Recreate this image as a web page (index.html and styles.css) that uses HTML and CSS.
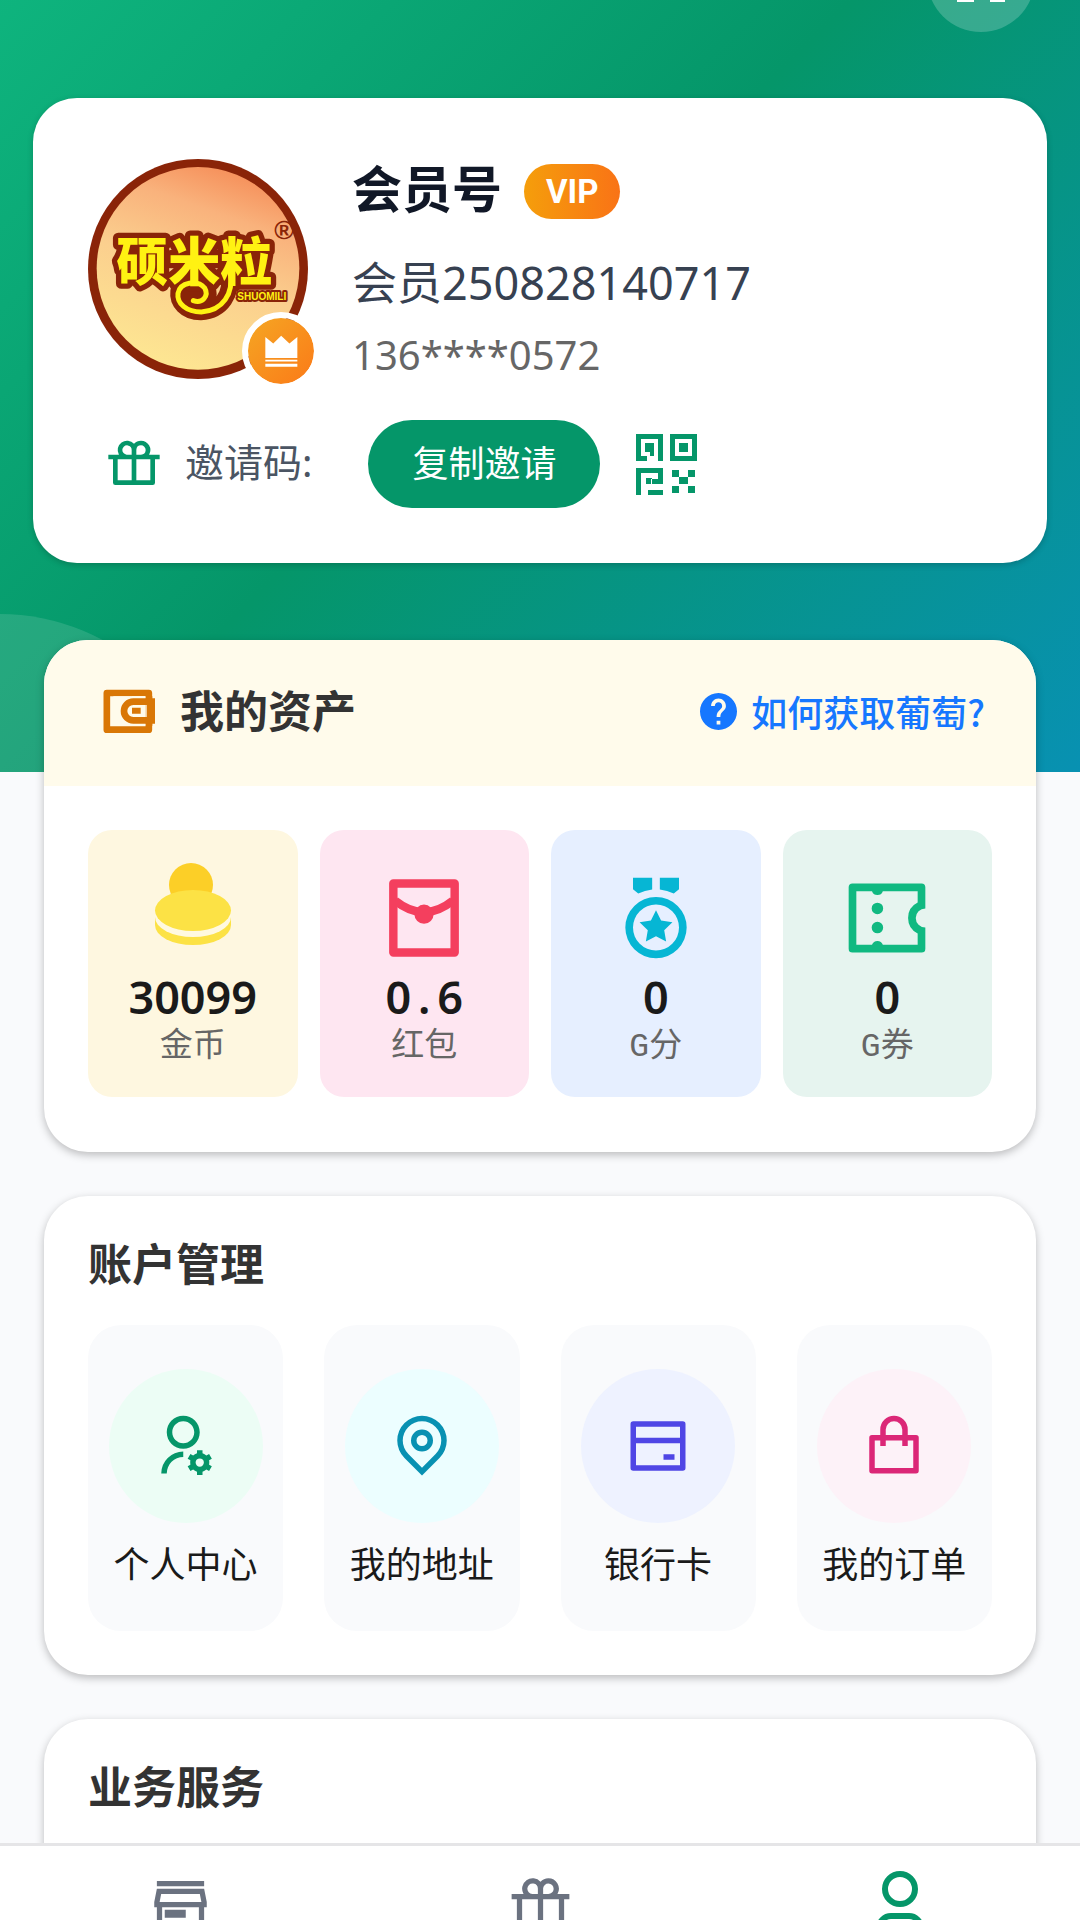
FILE: index.html
```html
<!DOCTYPE html>
<html lang="zh-CN">
<head>
<meta charset="utf-8">
<meta name="viewport" content="width=device-width, initial-scale=1">
<title>会员中心</title>
<link rel="stylesheet" href="styles.css">
</head>
<body>
<main class="page">
  <header class="hero">
    <button class="hero-action" type="button" aria-label="扫码">
      <svg viewBox="0 0 48 48" width="48" height="48"><path d="M0 30h5v13h12v5H0zM48 30h-5v13H33v5h15z" fill="#fff"/></svg>
    </button>
    <section class="profile">
      <div class="profile-top">
        <div class="avatar">
          <svg class="avatar-img" viewBox="55 57 660 660" role="img" aria-label="硕米粒">
            <defs>
              <linearGradient id="sky" x1=".75" y1="0" x2=".4" y2="1">
                <stop offset="0" stop-color="#f58a55"/>
                <stop offset=".25" stop-color="#f9b27c"/>
                <stop offset=".55" stop-color="#fbcf8e"/>
                <stop offset="1" stop-color="#fde692"/>
              </linearGradient>
            </defs>
            <circle cx="385" cy="387" r="330" fill="#8a2408"/>
            <circle cx="385" cy="385" r="304" fill="url(#sky)"/>
            <g fill="none" stroke-linecap="round">
              <path d="M478 400c10 60-20 112-85 116-45 0-70-30-66-62 6-36 52-48 76-22 18 26-4 54-30 48" stroke="#8a2408" stroke-width="50"/>
              <circle cx="385" cy="462" r="56" fill="#8a2408"/>
            </g>
            <text class="logo-text" x="140" y="422">硕米粒</text>
            <path d="M482 400c10 60-22 112-87 116-45 0-74-26-70-56 6-34 58-42 80-16 14 24-8 48-34 38" fill="none" stroke="#fff212" stroke-width="15" stroke-linecap="round"/>
            <text class="logo-latin" x="503" y="480">SHUOMILI</text>
            <text class="logo-mark" x="614" y="298">®</text>
          </svg>
          <span class="crown">
            <svg viewBox="580 585 104 100" width="35" height="33"><path d="M583 591l24 20 24-24 25 24 24-20v64h-97zM583 660h97v5h-97zM583 672h97v9h-97z" fill="#fff"/></svg>
          </span>
        </div>
        <div class="info">
          <div class="name-row"><h1 class="name">会员号</h1><span class="vip">VIP</span></div>
          <p class="member">会员250828140717</p>
          <p class="phone">136****0572</p>
        </div>
      </div>
      <div class="invite">
        <svg class="gift" viewBox="0 0 24 24" width="56" height="56"><path d="M15 2a4 4 0 0 1 3.464 6.001L23 8v2h-2v10a1 1 0 0 1-1 1H4a1 1 0 0 1-1-1V10H1V8l4.536.001A4 4 0 0 1 12 3.355 3.983 3.983 0 0 1 15 2zm-4 8H5v9h6v-9zm8 0h-6v9h6v-9zM9 4a2 2 0 0 0-.15 3.995L9 8h2V6a2 2 0 0 0-1.697-1.977l-.154-.018L9 4zm6 0a2 2 0 0 0-1.995 1.850L13 6v2h2a2 2 0 0 0 1.995-1.850L17 6a2 2 0 0 0-2-2z"/></svg>
        <span class="invite-label">邀请码:</span>
        <button class="copy" type="button">复制邀请</button>
        <button class="qr" type="button" aria-label="二维码">
          <svg viewBox="0 0 61 61" width="61" height="61"><path d="M0 0h27v27h-5V5H5v17h6v5H0zM9 9h9v13h-4v-4H9zM34 0h27v27H34zM39 5v17h17V5zM43 9h9v9h-9zM0 34h27v16H15v-5h7v-6H5v22H0zM10 44h6v6h-6zM12 56h15v5H12zM36 36h7v7h-7zM52 36h7v7h-7zM43 43h9v7h-9zM36 52h7v7h-7zM52 52h7v7h-7z" fill="#059669" fill-rule="evenodd"/></svg>
        </button>
      </div>
    </section>
  </header>

  <section class="card assets">
    <div class="assets-head">
      <svg viewBox="300 259 174 150" width="58" height="50"><path d="M320.500 280h126v110h-126z" fill="none" stroke="#d97706" stroke-width="20" stroke-linejoin="round"/><path d="M436 290h21v6h8v76h-8v6h-21z" fill="#d97706"/><path d="M340 290h96v88h-96z" fill="#fffbeb"/><path d="M436 293h-40M436 375h-40" stroke="#fffbeb" stroke-width="6"/><path d="M450 306h-50a28 28 0 0 0 0 56h50" fill="none" stroke="#d97706" stroke-width="20"/><path d="M438 316v36" stroke="#fffbeb" stroke-width="4"/><path d="M396 324h26v18h-26z" fill="#d97706"/></svg>
      <h2 class="title">我的资产</h2>
      <a class="help" href="#help">
        <svg viewBox="2 2 20 20" width="37" height="37"><path fill="#1677ff" d="M12 2C6.480 2 2 6.480 2 12s4.480 10 10 10 10-4.480 10-10S17.520 2 12 2zm1 17h-2v-2h2v2zm2.070-7.750l-.9.920C13.450 12.900 13 13.500 13 15h-2v-.5c0-1.100.450-2.100 1.170-2.830l1.240-1.260c.370-.360.590-.860.590-1.410 0-1.100-.900-2-2-2s-2 .9-2 2H8c0-2.210 1.790-4 4-4s4 1.790 4 4c0 .880-.360 1.680-.930 2.250z"/></svg>
        <span>如何获取葡萄?</span>
      </a>
    </div>
    <div class="asset-grid">
      <a class="asset gold" href="#gold">
        <svg viewBox="0 0 92 92" width="92" height="92" overflow="visible"><circle cx="44" cy="13" r="22" fill="#fccf27"/><path d="M8 38v15a38 20 0 0 0 76 0V38z" fill="#fce245"/><path d="M8 30v15a38 20 0 0 0 76 0V30z" fill="#fff9e0"/><ellipse cx="46" cy="38.500" rx="38" ry="20.500" fill="#fce245"/><path d="M7 28v10q1-9 9-15zM85 28v10q-1-9-9-15z" fill="#fef7e0"/></svg>
        <strong class="num">30099</strong><span class="unit">金币</span>
      </a>
      <a class="asset red" href="#packet">
        <svg viewBox="0 0 24 24" width="92" height="92" fill="none" stroke="#f43f5e" stroke-width="2.200"><path d="M4 3h16v18H4z" stroke-linejoin="round"/><path d="M4.500 7.500Q12 13.500 19.500 7.500"/><circle cx="12" cy="11" r="2.500" fill="#f43f5e" stroke="none"/></svg>
        <strong class="num">0<span class="point">.</span>6</strong><span class="unit">红包</span>
      </a>
      <a class="asset blue" href="#points">
        <svg viewBox="0 .5 24 24" width="92" height="92"><path fill="#06b6d4" d="M12 7a8 8 0 1 1 0 16 8 8 0 0 1 0-16zm0 2a6 6 0 1 0 0 12 6 6 0 0 0 0-12zm0 1.500l1.323 2.680 2.957.430-2.140 2.085.505 2.946L12 17.250l-2.645 1.390.505-2.945-2.140-2.086 2.957-.430L12 10.500zM18 2v3l-1.363 1.138A9.935 9.935 0 0 0 13 5.049V2h5zm-7 0v3.050a9.935 9.935 0 0 0-3.636 1.088L6 5V2h5z"/></svg>
        <strong class="num">0</strong><span class="unit">G分</span>
      </a>
      <a class="asset green" href="#coupons">
        <svg viewBox="0 0 24 24" width="92" height="92"><path fill="#10b981" d="M2 4a1 1 0 0 1 1-1h18a1 1 0 0 1 1 1v5.500a2.500 2.500 0 1 0 0 5V20a1 1 0 0 1-1 1H3a1 1 0 0 1-1-1V4zm6.085 15a1.500 1.500 0 0 1 2.830 0H20v-2.968a4.500 4.500 0 0 1 0-8.064V5h-9.085a1.500 1.500 0 0 1-2.830 0H4v14h4.085zM9.500 11a1.500 1.500 0 1 1 0-3 1.500 1.500 0 0 1 0 3zm0 5a1.500 1.500 0 1 1 0-3 1.500 1.500 0 0 1 0 3z"/></svg>
        <strong class="num">0</strong><span class="unit">G券</span>
      </a>
    </div>
  </section>

  <section class="card panel">
    <h2 class="title">账户管理</h2>
    <nav class="menu" aria-label="账户管理">
      <a class="entry" href="#me"><span class="disc mint"><svg viewBox="1 0 24 24" width="66" height="66"><path d="M12 14v2a6 6 0 0 0-6 6H4a8 8 0 0 1 8-8zm0-1c-3.315 0-6-2.685-6-6s2.685-6 6-6 6 2.685 6 6-2.685 6-6 6zm0-2c2.210 0 4-1.790 4-4s-1.790-4-4-4-4 1.790-4 4 1.790 4 4 4zm2.595 7.812a3.510 3.510 0 0 1 0-1.623l-.992-.573 1-1.732.992.573A3.496 3.496 0 0 1 17 14.645V13.500h2v1.145c.532.158 1.012.440 1.405.812l.992-.573 1 1.732-.992.573a3.510 3.510 0 0 1 0 1.622l.992.573-1 1.732-.992-.573a3.496 3.496 0 0 1-1.405.812V22.500h-2v-1.145a3.496 3.496 0 0 1-1.405-.812l-.992.573-1-1.732.992-.572zM18 19.500a1.500 1.500 0 1 0 0-3 1.500 1.500 0 0 0 0 3z"/></svg></span><span>个人中心</span></a>
      <a class="entry" href="#address"><span class="disc cyan"><svg viewBox="0 1 24 24" width="66" height="66"><path d="M12 20.900l4.950-4.950a7 7 0 1 0-9.900 0L12 20.900zm0 2.828l-6.364-6.364a9 9 0 1 1 12.728 0L12 23.728zM12 13a2 2 0 1 0 0-4 2 2 0 0 0 0 4zm0 2a4 4 0 1 1 0-8 4 4 0 0 1 0 8z"/></svg></span><span>我的地址</span></a>
      <a class="entry" href="#cards"><span class="disc indigo"><svg viewBox="0 0 24 24" width="66" height="66"><path d="M3 3h18a1 1 0 0 1 1 1v16a1 1 0 0 1-1 1H3a1 1 0 0 1-1-1V4a1 1 0 0 1 1-1zm17 8H4v8h16v-8zm0-2V5H4v4h16zm-6 6h4v2h-4v-2z"/></svg></span><span>银行卡</span></a>
      <a class="entry" href="#orders"><span class="disc pink"><svg viewBox="0 0 24 24" width="66" height="66"><path d="M7 8V6a5 5 0 1 1 10 0v2h3a1 1 0 0 1 1 1v12a1 1 0 0 1-1 1H4a1 1 0 0 1-1-1V9a1 1 0 0 1 1-1h3zm0 2H5v10h14V10h-2v2h-2v-2H9v2H7v-2zm2-2h6V6a3 3 0 0 0-6 0v2z"/></svg></span><span>我的订单</span></a>
    </nav>
  </section>

  <section class="card panel services">
    <h2 class="title">业务服务</h2>
  </section>
</main>
<nav class="tabbar" aria-label="主导航">
  <a class="tab" href="#shop" aria-label="商城"><svg viewBox="0 0 24 24" width="63" height="63"><path d="M21 13v7a1 1 0 0 1-1 1H4a1 1 0 0 1-1-1v-7H2v-2l1-5h18l1 5v2h-1zM5 13v6h14v-6H5zm-.960-2h15.920l-.600-3H4.640l-.600 3zM6 14h8v3H6v-3zM3 3h18v2H3V3z"/></svg></a>
  <a class="tab" href="#gifts" aria-label="礼品"><svg viewBox="0 0 24 24" width="63" height="63"><path d="M15 2a4 4 0 0 1 3.464 6.001L23 8v2h-2v10a1 1 0 0 1-1 1H4a1 1 0 0 1-1-1V10H1V8l4.536.001A4 4 0 0 1 12 3.355 3.983 3.983 0 0 1 15 2zm-4 8H5v9h6v-9zm8 0h-6v9h6v-9zM9 4a2 2 0 0 0-.15 3.995L9 8h2V6a2 2 0 0 0-1.697-1.977l-.154-.018L9 4zm6 0a2 2 0 0 0-1.995 1.850L13 6v2h2a2 2 0 0 0 1.995-1.850L17 6a2 2 0 0 0-2-2z"/></svg></a>
  <a class="tab active" href="#mine" aria-label="我的" aria-current="page"><svg viewBox="0 0 24 24" width="72" height="72"><path d="M20 22h-2v-2a3 3 0 0 0-3-3H9a3 3 0 0 0-3 3v2H4v-2a5 5 0 0 1 5-5h6a5 5 0 0 1 5 5v2zm-8-9a6 6 0 1 1 0-12 6 6 0 0 1 0 12zm0-2a4 4 0 1 0 0-8 4 4 0 0 0 0 8z"/></svg></a>
</nav>
</body>
</html>
```

FILE: styles.css
```css
* {
  box-sizing: border-box;
}

body {
  margin: 0;
  height: 100vh;
  display: flex;
  flex-direction: column;
  overflow: hidden;
  background: #f9fafc;
  color: #1a1a1a;
  font-family: "Noto Sans", "Noto Sans CJK SC", sans-serif;
}

h1, h2, p {
  margin: 0;
}

a {
  color: inherit;
  text-decoration: none;
}

button {
  border: 0;
  padding: 0;
  background: none;
  font: inherit;
}

svg {
  display: block;
  flex: none;
}

.page {
  flex: 1;
  min-height: 0;
  overflow: hidden;
}

/* Gradient header with the profile card */
.hero {
  position: relative;
  overflow: hidden;
  padding: 98px 33px 209px;
  background: linear-gradient(135deg, #10b981 -8%, #059669 46%, #0891b2 100%);
}

.hero::before {
  content: "";
  position: absolute;
  left: -216px;
  bottom: -274px;
  width: 432px;
  height: 432px;
  border-radius: 50%;
  background: rgba(255, 255, 255, 0.12);
}

.hero-action {
  position: absolute;
  top: -76px;
  right: 45px;
  width: 108px;
  height: 108px;
  border-radius: 50%;
  background: rgba(255, 255, 255, 0.2);
  display: grid;
  place-items: center;
}

.profile {
  position: relative;
  padding: 61px 55px 55px;
  border-radius: 44px;
  background: #fff;
  box-shadow: 0 2px 6px rgba(0, 0, 0, 0.2);
}

.profile-top {
  display: flex;
  gap: 44px;
}

.avatar {
  position: relative;
  width: 220px;
  height: 220px;
}

.avatar-img {
  width: 100%;
  height: 100%;
}

.logo-text {
  font-family: "Noto Sans CJK SC", sans-serif;
  font-size: 156px;
  font-weight: 900;
  fill: #fff212;
  stroke: #8a2408;
  stroke-width: 32px;
  stroke-linejoin: round;
  paint-order: stroke;
}

.logo-latin {
  font-family: "Liberation Sans", sans-serif;
  font-size: 30px;
  font-weight: 700;
  fill: #fff212;
  stroke: #8a2408;
  stroke-width: 12px;
  stroke-linejoin: round;
  paint-order: stroke;
}

.logo-mark {
  font-family: "Liberation Sans", sans-serif;
  font-size: 80px;
  font-weight: 700;
  fill: #8a2408;
}

.crown {
  position: absolute;
  right: -12px;
  bottom: -11px;
  width: 78px;
  height: 78px;
  border: 6px solid #fff;
  border-radius: 50%;
  background: linear-gradient(135deg, #f5a623, #fb7a18);
  background-clip: padding-box;
  display: grid;
  place-items: center;
}

.info {
  display: flex;
  flex-direction: column;
}

.name-row {
  display: flex;
  align-items: center;
  gap: 22px;
  height: 64px;
}

.name {
  padding-bottom: 4px;
  font-size: 50px;
  line-height: 60px;
  font-weight: 600;
  color: #111827;
}

.vip {
  padding: 0 22px;
  border-radius: 28px;
  background: linear-gradient(90deg, #f59e0b, #f97316);
  color: #fff;
  font-family: Roboto, sans-serif;
  font-size: 33px;
  line-height: 55px;
  font-weight: 700;
}

.member {
  margin-top: 27px;
  font-size: 45px;
  line-height: 66px;
  color: #374151;
}

.phone {
  margin-top: 15px;
  font-size: 40px;
  line-height: 48px;
  color: #666;
}

.invite {
  display: flex;
  align-items: center;
  margin-top: 41px;
  padding-left: 18px;
}

.gift {
  fill: #059669;
}

.invite-label {
  margin-left: 23px;
  padding-bottom: 4px;
  font-size: 39px;
  line-height: 56px;
  color: #4b5563;
}

.copy {
  margin-left: 56px;
  padding: 0 44px;
  border-radius: 44px;
  background: #059669;
  color: #fff;
  font-size: 36px;
  line-height: 88px;
}

.qr {
  margin-left: 36px;
}

/* Cards */
.card {
  position: relative;
  margin: 0 44px 44px;
  border-radius: 44px;
  background: #fff;
  box-shadow: 0 3px 8px rgba(0, 0, 0, 0.25);
}

.title {
  font-size: 44px;
  line-height: 48px;
  font-weight: 600;
  color: #333;
}

.assets {
  margin-top: -132px;
  overflow: hidden;
}

.assets-head {
  display: flex;
  align-items: center;
  gap: 22px;
  height: 146px;
  padding: 0 51px 4px 56px;
  background: #fffbeb;
}

.help {
  display: flex;
  align-items: center;
  gap: 14px;
  margin-left: auto;
  color: #1677ff;
  font-family: "Noto Sans CJK SC", sans-serif;
  font-size: 36px;
  line-height: 48px;
  font-weight: 500;
}

.asset-grid {
  display: grid;
  grid-template-columns: repeat(4, 1fr);
  gap: 22px;
  padding: 44px 44px 55px;
}

.asset {
  display: flex;
  flex-direction: column;
  align-items: center;
  padding: 42px 0 26px;
  border-radius: 24px;
}

.gold { background: #fef7e0; }
.red { background: #fee6f1; }
.blue { background: #e6efff; }
.green { background: #e6f4ef; }

.num {
  margin-top: 6px;
  font-size: 45px;
  line-height: 54px;
  font-weight: 600;
}

.point {
  display: inline-block;
  width: 26px;
  text-align: center;
}

.unit {
  font-family: "Liberation Mono", "Noto Sans CJK SC", monospace;
  font-size: 33px;
  line-height: 47px;
  color: #666;
}

.panel {
  padding: 44px;
}

.services {
  padding-bottom: 132px;
}

.menu {
  display: grid;
  grid-template-columns: repeat(4, 1fr);
  gap: 41px;
  margin-top: 37px;
}

.entry {
  display: flex;
  flex-direction: column;
  align-items: center;
  gap: 18px;
  padding: 44px 0 42px;
  border-radius: 33px;
  background: #f9fafc;
  font-size: 36px;
  line-height: 48px;
}

.disc {
  display: grid;
  place-items: center;
  width: 154px;
  height: 154px;
  border-radius: 50%;
}

.mint { background: #ecfdf5; fill: #059669; }
.cyan { background: #ecfeff; fill: #0891b2; }
.indigo { background: #eef2ff; fill: #4f46e5; }
.pink { background: #fdf2f8; fill: #db2777; }

/* Bottom navigation, partly below the fold */
.tabbar {
  position: relative;
  flex: none;
  display: grid;
  grid-template-columns: repeat(3, 1fr);
  height: 77px;
  border-top: 3px solid #e5e5e7;
  background: #fff;
}

.tab {
  display: flex;
  align-items: center;
  justify-content: center;
  height: 116px;
  fill: #6b7280;
}

.active {
  fill: #059669;
}
```
